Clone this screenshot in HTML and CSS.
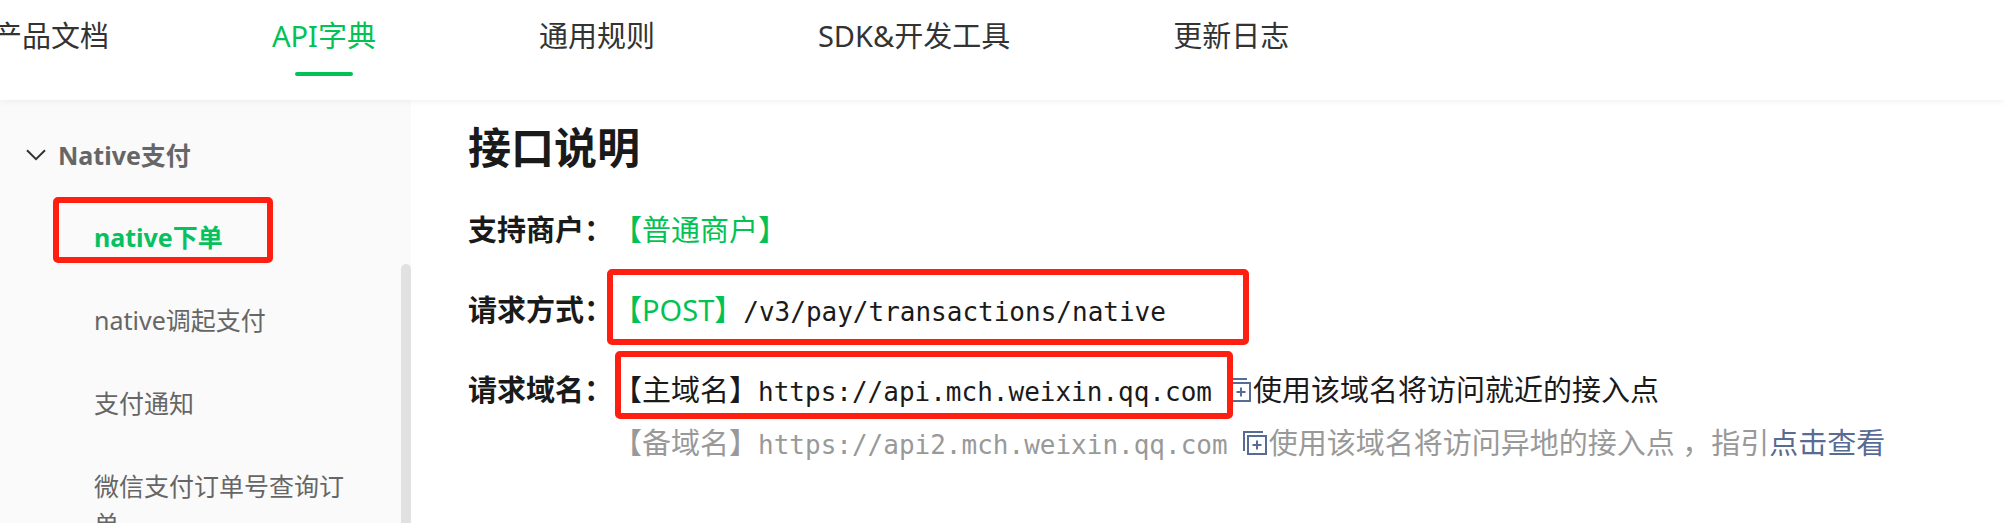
FILE: index.html
```html
<!DOCTYPE html>
<html lang="zh-CN">
<head>
<meta charset="utf-8">
<title>Native下单 - API字典</title>
<link rel="stylesheet" href="styles.css">
</head>
<body>
<header class="header">
  <nav class="nav">
    <a class="nav-link" href="#docs">产品文档</a>
    <a class="nav-link active" href="#api">API字典</a>
    <a class="nav-link" href="#rules">通用规则</a>
    <a class="nav-link" href="#sdk">SDK&amp;开发工具</a>
    <a class="nav-link" href="#changelog">更新日志</a>
  </nav>
</header>
<div class="layout">
  <aside class="sidebar">
    <button class="group" type="button" aria-expanded="true">
      <svg class="chevron" viewBox="0 0 20 12" aria-hidden="true"><path d="M1 1.2l9 9 9-9"/></svg>
      <span>Native支付</span>
    </button>
    <ul class="menu">
      <li class="menu-item"><a class="menu-link current" href="#order">native下单</a><span class="mark mark-menu"></span></li>
      <li class="menu-item"><a class="menu-link" href="#invoke">native调起支付</a></li>
      <li class="menu-item"><a class="menu-link" href="#notify">支付通知</a></li>
      <li class="menu-item"><a class="menu-link" href="#query">微信支付订单号查询订单</a></li>
    </ul>
    <div class="scroll-thumb"></div>
  </aside>
  <main class="content">
    <h1 class="title">接口说明</h1>
    <dl class="facts">
      <div class="fact">
        <dt class="label">支持商户：</dt>
        <dd class="value"><p class="line green">【普通商户】</p></dd>
      </div>
      <div class="fact">
        <dt class="label">请求方式：</dt>
        <dd class="value">
          <p class="line"><span class="green">【POST】</span><code class="code">/v3/pay/transactions/native</code></p>
          <span class="mark mark-method"></span>
        </dd>
      </div>
      <div class="fact">
        <dt class="label">请求域名：</dt>
        <dd class="value">
          <p class="line">【主域名】<code class="code">https://api.mch.weixin.qq.com</code><button class="copy" type="button" aria-label="复制主域名"><svg class="copy-icon" viewBox="0 0 24 24" aria-hidden="true"><path d="M1 20V1h19M5 5h18v18H5zM14 9.500v9M9.500 14h9"/></svg></button>使用该域名将访问就近的接入点</p>
          <p class="line muted">【备域名】<code class="code">https://api2.mch.weixin.qq.com</code><button class="copy" type="button" aria-label="复制备域名"><svg class="copy-icon" viewBox="0 0 24 24" aria-hidden="true"><path d="M1 20V1h19M5 5h18v18H5zM14 9.500v9M9.500 14h9"/></svg></button>使用该域名将访问异地的接入点 ，指引<a class="link" href="#guide">点击查看</a></p>
          <span class="mark mark-domain"></span>
        </dd>
      </div>
    </dl>
  </main>
</div>
</body>
</html>
```

FILE: styles.css
```css
* {
  box-sizing: border-box;
}

body {
  margin: 0;
  height: 100vh;
  display: flex;
  flex-direction: column;
  overflow: hidden;
  background: #fff;
  color: #1a1a1a;
  font-family: "Noto Sans", "Noto Sans CJK SC", sans-serif;
  font-size: 29px;
}

a {
  text-decoration: none;
}

button {
  padding: 0;
  border: 0;
  background: none;
  font: inherit;
  cursor: pointer;
}

.header {
  flex: none;
  position: relative;
  z-index: 1;
  background: #fff;
  box-shadow: 0 0 8px rgba(0, 0, 0, 0.08);
}

.nav {
  display: flex;
  gap: 163px;
  height: 100px;
  margin-left: -7px;
  white-space: nowrap;
}

.nav-link {
  display: flex;
  flex-direction: column;
  align-items: center;
  line-height: 72px;
  color: #333;
}

.nav-link.active {
  color: #03c253;
}

.nav-link.active::after {
  content: "";
  width: 58px;
  height: 4px;
  border-radius: 2px;
  background: #03c253;
}

.layout {
  flex: 1;
  min-height: 0;
  display: flex;
}

.sidebar {
  flex: none;
  position: relative;
  width: 411px;
  padding-top: 13px;
  overflow: hidden;
  background: #fafafa;
  color: #666;
  font-size: 25px;
  line-height: 38px;
}

.group {
  display: flex;
  align-items: center;
  gap: 12px;
  padding: 23px 0 22px 26px;
  color: #666;
  font-weight: 700;
}

.chevron {
  width: 20px;
  height: 12px;
  fill: none;
  stroke: #333;
  stroke-width: 2;
}

.menu {
  margin: 0;
  padding: 0;
  list-style: none;
}

.menu-item {
  position: relative;
}

.menu-link {
  display: block;
  padding: 22px 54px 23px 94px;
  color: #666;
}

.menu-link.current {
  color: #07c160;
  font-weight: 700;
}

.scroll-thumb {
  position: absolute;
  top: 164px;
  right: 0;
  bottom: -8px;
  width: 10px;
  border-radius: 5px;
  background: #e1e1e1;
}

.content {
  flex: 1;
  min-width: 0;
  padding: 16px 40px 0 57px;
}

.title {
  margin: 0 0 23px;
  font-size: 43px;
  line-height: 64px;
}

.facts {
  display: flex;
  flex-direction: column;
  gap: 27px;
  margin: 0;
  line-height: 53px;
}

.fact {
  display: flex;
}

.label {
  flex: none;
  font-weight: 700;
}

.value {
  position: relative;
  margin: 0;
}

.line {
  display: flex;
  align-items: baseline;
  margin: 0;
  white-space: pre;
}

.green {
  color: #03c253;
}

.muted {
  color: #999;
}

.code {
  font-family: "DejaVu Sans Mono", monospace;
  font-size: 26px;
  line-height: 40px;
}

.copy {
  display: flex;
  align-self: center;
  margin: 0 2px 0 15px;
}

.copy-icon {
  width: 24px;
  height: 24px;
  fill: none;
  stroke: #576b95;
  stroke-width: 2;
}

.link {
  color: #576b95;
}

/* Highlight frames laid over the content */
.mark {
  position: absolute;
  border: 6px solid #ff1f11;
  border-radius: 5px;
  pointer-events: none;
}

.mark-menu {
  top: 1px;
  left: 53px;
  width: 220px;
  height: 66px;
}

.mark-method {
  top: -14px;
  left: -6px;
  width: 642px;
  height: 76px;
}

.mark-domain {
  top: -12px;
  left: 2px;
  width: 618px;
  height: 68px;
}
```
